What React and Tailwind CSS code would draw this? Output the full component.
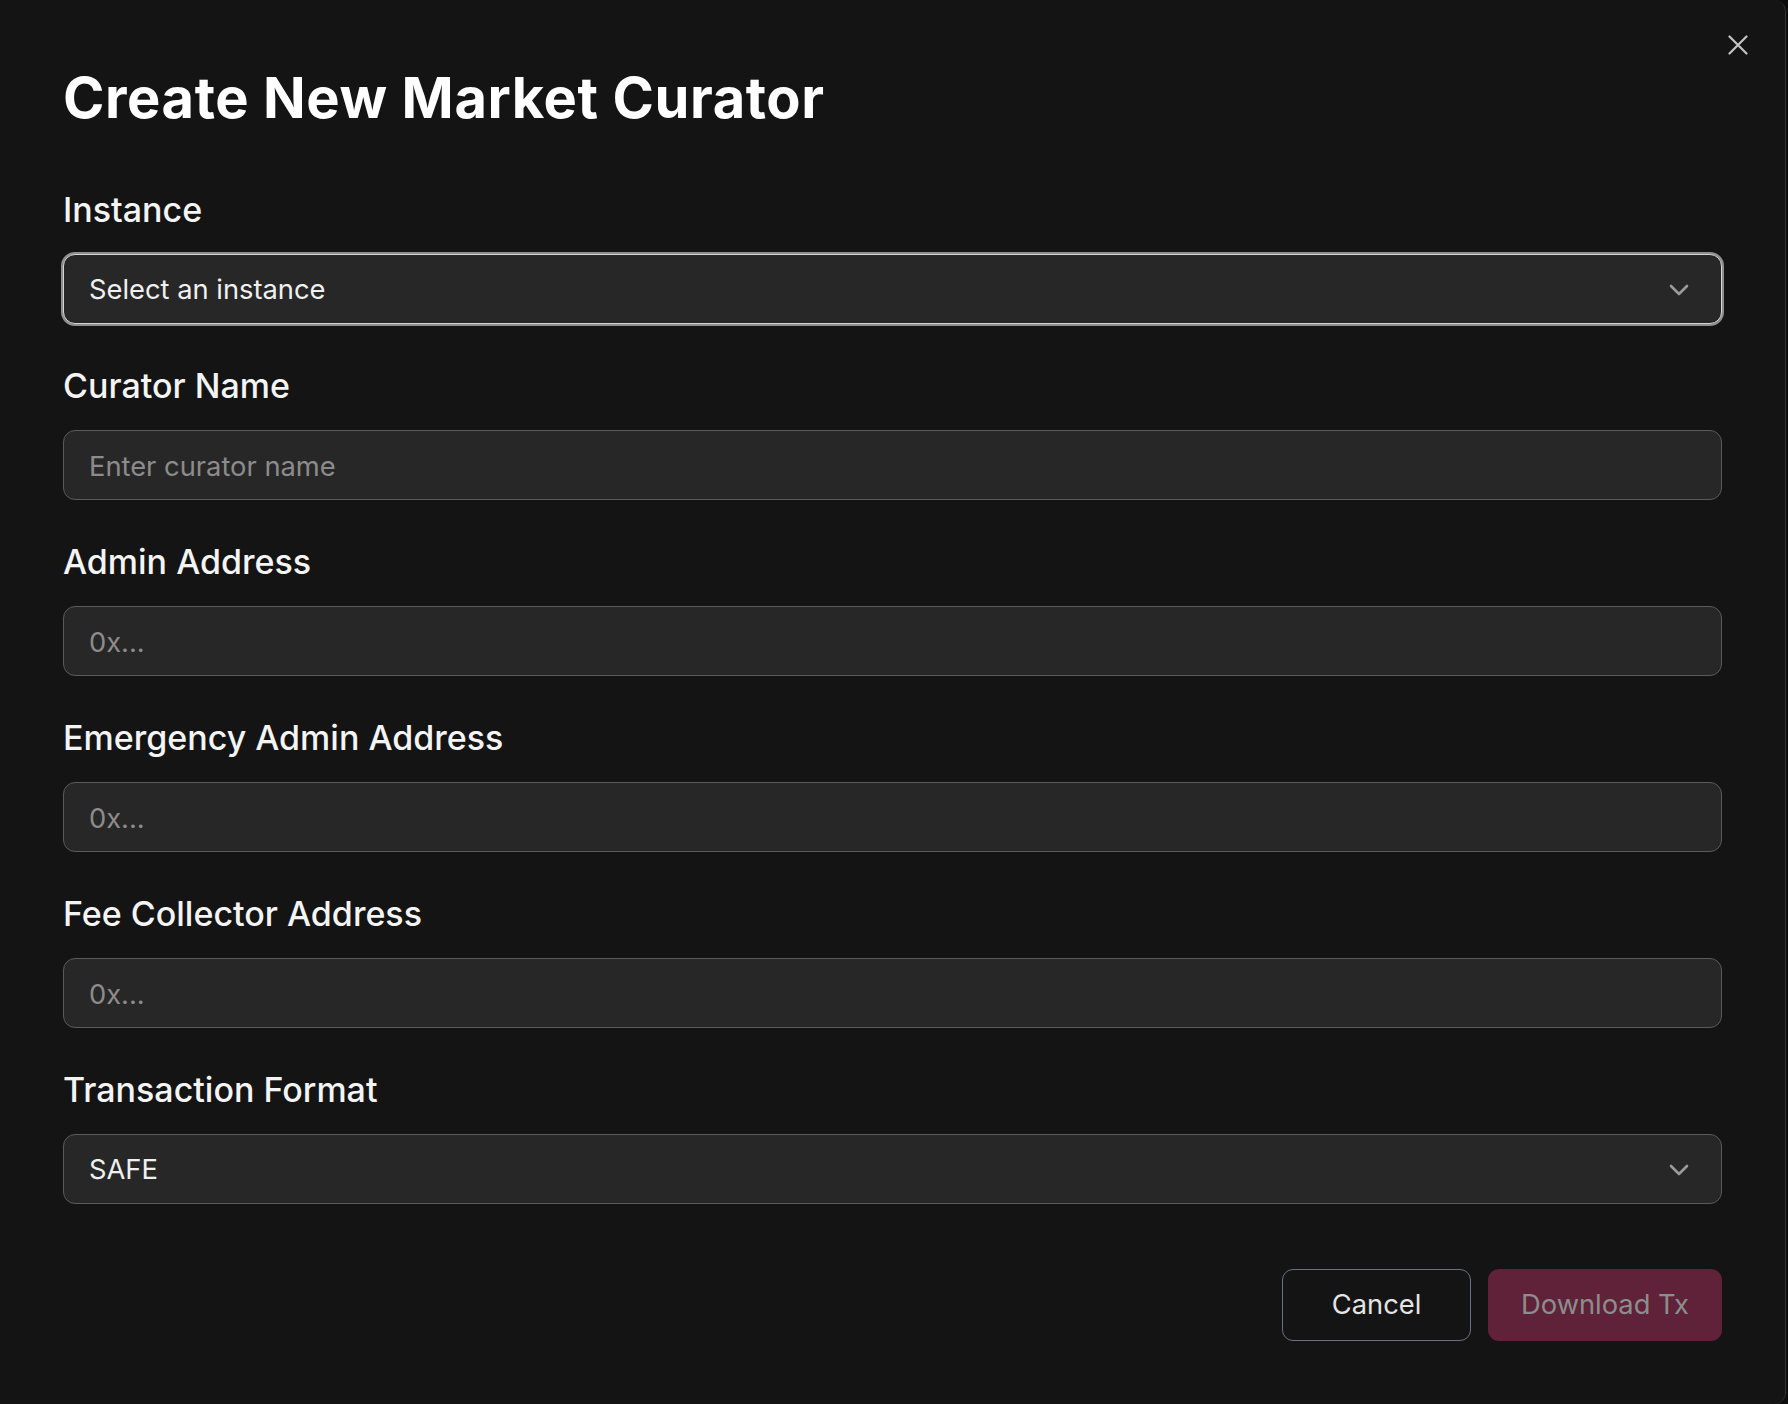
import React from "react";

function Chevron() {
  return (
    <svg width="20" height="12" viewBox="0 0 20 12" fill="none" className="shrink-0">
      <path d="M2 2 L10 10 L18 2" stroke="#9a9a9a" strokeWidth="2.6" strokeLinecap="round" strokeLinejoin="round" />
    </svg>
  );
}

function Label({ children }) {
  return <div className="text-[34px] leading-[40px] font-medium text-[#f4f4f5]">{children}</div>;
}

function TextField({ label, placeholder }) {
  return (
    <div className="flex flex-col mt-[42px]">
      <Label>{label}</Label>
      <input
        className="mt-[24px] h-[70px] w-full rounded-[12px] border-[1.5px] border-[#5a5a5a] bg-[#272727] px-[25px] pt-[2px] text-[27.3px] text-[#eeeeee] placeholder:text-[#8c8c8c] outline-none"
        style={{ fontFamily: "Inter, 'Noto Sans', sans-serif" }}
        placeholder={placeholder}
      />
    </div>
  );
}

export default function App() {
  return (
    <div className="w-[1788px] h-[1404px] bg-[#0e0e0e] flex" style={{ fontFamily: "Inter, 'Noto Sans', sans-serif" }}>
      <div className="relative w-[1786px] h-[1404px] bg-[#141414] rounded-tr-[12px] rounded-br-[12px] border-r border-[#333333] px-[63px] pt-[66px] flex flex-col">
        <button className="absolute top-[35px] right-[37px] w-[20px] h-[20px] flex items-center justify-center">
          <svg width="20" height="20" viewBox="0 0 20 20" fill="none">
            <path d="M1.5 1.5 L18.5 18.5 M18.5 1.5 L1.5 18.5" stroke="#c4c4c4" strokeWidth="2.2" strokeLinecap="round" />
          </svg>
        </button>

        <h1 className="text-[56px] leading-[64px] font-bold text-white tracking-[0.6px]">Create New Market Curator</h1>

        <div className="flex flex-col mt-[60px]">
          <Label>Instance</Label>
          <div className="mt-[24px] h-[70px] w-full rounded-[12px] border-[1.5px] border-[#d4d4d4] ring-2 ring-[#8f8f8f] bg-[#272727] px-[25px] pr-[32px] pt-[2px] flex items-center justify-between">
            <span className="text-[27.3px] text-[#f0f0f0]">Select an instance</span>
            <Chevron />
          </div>
        </div>

        <TextField label="Curator Name" placeholder="Enter curator name" />
        <TextField label="Admin Address" placeholder="0x..." />
        <TextField label="Emergency Admin Address" placeholder="0x..." />
        <TextField label="Fee Collector Address" placeholder="0x..." />

        <div className="flex flex-col mt-[42px]">
          <Label>Transaction Format</Label>
          <div className="mt-[24px] h-[70px] w-full rounded-[12px] border-[1.5px] border-[#5a5a5a] bg-[#272727] px-[25px] pr-[32px] pt-[2px] flex items-center justify-between">
            <span className="text-[27.3px] text-[#f0f0f0]">SAFE</span>
            <Chevron />
          </div>
        </div>

        <div className="mt-[65px] flex justify-end gap-[17px]">
          <button className="w-[189px] h-[72px] rounded-[11px] border-[1.5px] border-[#6b7080] bg-transparent text-[27.3px] text-[#e4e4e4]">
            Cancel
          </button>
          <button className="w-[234px] h-[72px] rounded-[11px] bg-[#5f2239] text-[27.3px] text-[#8d8d8d]">
            Download Tx
          </button>
        </div>
      </div>
    </div>
  );
}
